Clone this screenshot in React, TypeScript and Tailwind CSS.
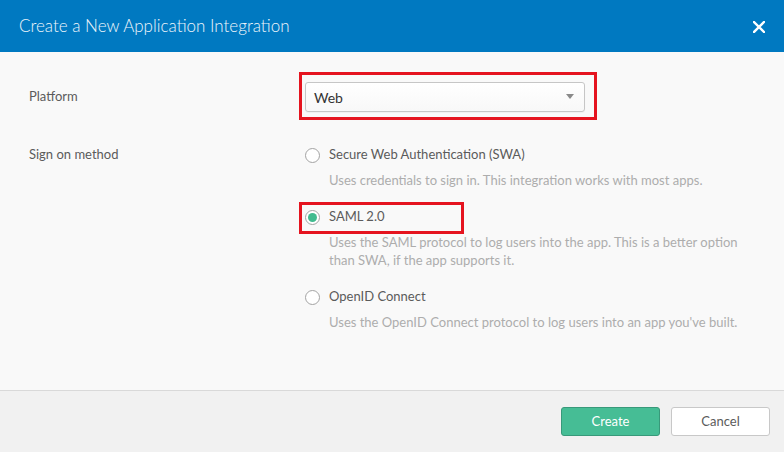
import React from 'react';

function Radio({ checked }: { checked?: boolean }) {
    return (
        <span className="w-[15px] h-[15px] rounded-full border border-[#a3a3a3] bg-white flex items-center justify-center shrink-0">
            {checked && <span className="w-[9px] h-[9px] rounded-full bg-[#41bb8f]"></span>}
        </span>
    );
}

export default function App() {
    return (
        <div className="w-[784px] h-[452px] flex flex-col bg-[#f9f9f9] text-[13px] font-['Lato','Liberation_Sans',sans-serif] overflow-hidden">
            {/* Header */}
            <div className="h-[52px] bg-[#0079c1] flex items-center justify-between pl-[19px] pr-[19px] shrink-0">
                <h1 className="text-[17px] text-[#eef5fb] font-light">Create a New Application Integration</h1>
                <button className="w-[12px] h-[12px] mt-[2px]">
                    <svg width="12" height="12" viewBox="0 0 12 12">
                        <path d="M1 1 L11 11 M11 1 L1 11" stroke="#fff" strokeWidth="2.4" strokeLinecap="square" />
                    </svg>
                </button>
            </div>

            {/* Body */}
            <div className="flex-1 pt-[30px]">
                {/* Platform */}
                <div className="flex items-center">
                    <div className="w-[305px] pl-[29px] text-[#5b5b5b]">Platform</div>
                    <div className="relative">
                        <div className="absolute left-[-6px] top-[-10px] right-[-12px] bottom-[-8px] border-[3px] border-[#e5141f]"></div>
                        <div className="relative w-[280px] h-[30px] rounded-[3px] border border-[#c6c6c6] bg-gradient-to-b from-white to-[#f8f8f8] flex items-center justify-between pl-[8px] pr-[10px] shadow-[0_1px_1px_rgba(0,0,0,0.04)]">
                            <span className="text-[#333] text-[14px]">Web</span>
                            <svg width="8" height="6" viewBox="0 0 8 6">
                                <path d="M0 0 L8 0 L4 5 Z" fill="#8a8a8a" />
                            </svg>
                        </div>
                    </div>
                </div>

                {/* Sign on method */}
                <div className="flex mt-[33px]">
                    <div className="w-[305px] pl-[29px] text-[#5b5b5b] h-[20px] flex items-center">Sign on method</div>
                    <div className="flex flex-col">
                        <div className="flex items-center h-[20px] gap-[9px] text-[#5b5b5b]">
                            <Radio />
                            <span>Secure Web Authentication (SWA)</span>
                        </div>
                        <p className="ml-[24px] mt-[6px] leading-[18px] text-[#adadad]">
                            Uses credentials to sign in. This integration works with most apps.
                        </p>

                        <div className="relative flex items-center h-[20px] gap-[9px] text-[#5b5b5b] mt-[18px]">
                            <div className="absolute left-[-6px] top-[-5px] w-[165px] h-[32px] border-[3px] border-[#e5141f]"></div>
                            <Radio checked />
                            <span>SAML 2.0</span>
                        </div>
                        <p className="ml-[24px] mt-[6px] leading-[18px] text-[#adadad]">
                            Uses the SAML protocol to log users into the app. This is a better option
                            <br />
                            than SWA, if the app supports it.
                        </p>

                        <div className="flex items-center h-[20px] gap-[9px] text-[#5b5b5b] mt-[18px]">
                            <Radio />
                            <span>OpenID Connect</span>
                        </div>
                        <p className="ml-[24px] mt-[6px] leading-[18px] text-[#adadad]">
                            Uses the OpenID Connect protocol to log users into an app you've built.
                        </p>
                    </div>
                </div>
            </div>

            {/* Footer */}
            <div className="h-[62px] shrink-0 bg-[#f1f1f1] border-t border-[#d9d9d9] flex items-center justify-end gap-[11px] pr-[14px]">
                <button className="w-[99px] h-[29px] rounded-[3px] bg-[#46bd95] border border-[#38997a] text-white">
                    Create
                </button>
                <button className="w-[99px] h-[29px] rounded-[3px] bg-white border border-[#c8c8c8] text-[#5b5b5b]">
                    Cancel
                </button>
            </div>
        </div>
    );
}
